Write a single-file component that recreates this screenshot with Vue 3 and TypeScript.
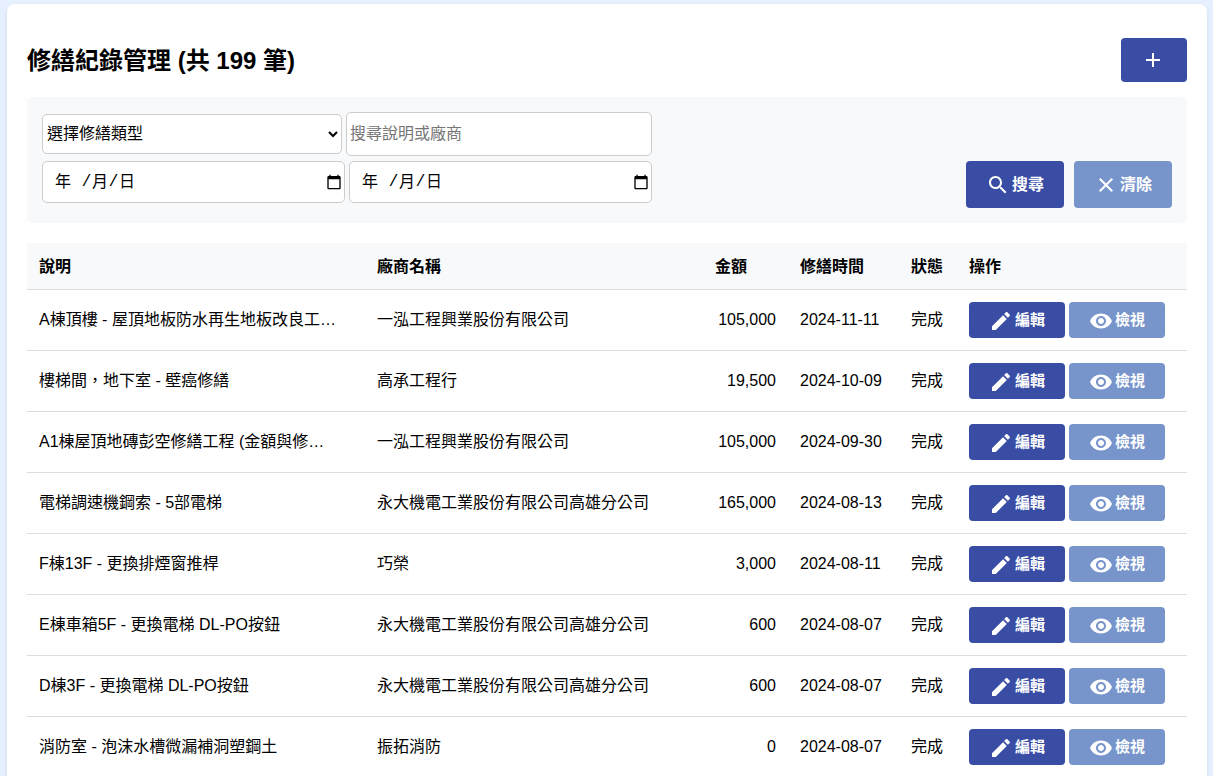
<script setup lang="ts">
import { ref } from 'vue'

interface RepairRecord {
  description: string
  vendor: string
  amount: number
  date: string
  status: string
}

const total = ref(199)
const category = ref('')
const keyword = ref('')
const ranges = ['開始日期', '結束日期']

const records = ref<RepairRecord[]>([
  { description: 'A棟頂樓 - 屋頂地板防水再生地板改良工…', vendor: '一泓工程興業股份有限公司', amount: 105000, date: '2024-11-11', status: '完成' },
  { description: '樓梯間，地下室 - 壁癌修繕', vendor: '高承工程行', amount: 19500, date: '2024-10-09', status: '完成' },
  { description: 'A1棟屋頂地磚彭空修繕工程 (金額與修…', vendor: '一泓工程興業股份有限公司', amount: 105000, date: '2024-09-30', status: '完成' },
  { description: '電梯調速機鋼索 - 5部電梯', vendor: '永大機電工業股份有限公司高雄分公司', amount: 165000, date: '2024-08-13', status: '完成' },
  { description: 'F棟13F - 更換排煙窗推桿', vendor: '巧榮', amount: 3000, date: '2024-08-11', status: '完成' },
  { description: 'E棟車箱5F - 更換電梯 DL-PO按鈕', vendor: '永大機電工業股份有限公司高雄分公司', amount: 600, date: '2024-08-07', status: '完成' },
  { description: 'D棟3F - 更換電梯 DL-PO按鈕', vendor: '永大機電工業股份有限公司高雄分公司', amount: 600, date: '2024-08-07', status: '完成' },
  { description: '消防室 - 泡沫水槽微漏補洞塑鋼土', vendor: '振拓消防', amount: 0, date: '2024-08-07', status: '完成' },
])

const formatAmount = (value: number): string => value.toLocaleString('en-US')
</script>

<template>
  <main class="card">
    <header class="heading">
      <h1>修繕紀錄管理 (共 {{ total }} 筆)</h1>
      <button class="btn primary add" type="button" aria-label="新增">
        <svg viewBox="0 0 24 24" aria-hidden="true"><path d="M19 13h-6v6h-2v-6H5v-2h6V5h2v6h6v2z" /></svg>
      </button>
    </header>

    <form class="filters" @submit.prevent>
      <div class="fields">
        <div class="line">
          <select v-model="category" class="box category" aria-label="修繕類型">
            <option value="">選擇修繕類型</option>
          </select>
          <input v-model="keyword" class="box keyword" type="text" placeholder="搜尋說明或廠商" aria-label="搜尋說明或廠商" />
        </div>
        <div class="line">
          <div v-for="label in ranges" :key="label" class="box date" role="group" :aria-label="label">
            <input class="year" type="text" placeholder="年" :aria-label="label + ' 年'" />
            <span class="slash">/</span>
            <input class="part" type="text" placeholder="月" :aria-label="label + ' 月'" />
            <span class="slash">/</span>
            <input class="part" type="text" placeholder="日" :aria-label="label + ' 日'" />
            <button class="picker" type="button" :aria-label="'選擇' + label">
              <svg viewBox="0 0 24 24" aria-hidden="true"><path d="M20 3h-1V1h-2v2H7V1H5v2H4c-1.1 0-2 .9-2 2v16c0 1.100.9 2 2 2h16c1.100 0 2-.9 2-2V5c0-1.100-.9-2-2-2zm0 18H4V8h16v13z" /></svg>
            </button>
          </div>
        </div>
      </div>
      <div class="actions">
        <button class="btn primary" type="submit">
          <svg viewBox="0 0 24 24" aria-hidden="true"><path d="M15.500 14h-.79l-.28-.27C15.410 12.590 16 11.110 16 9.500 16 5.910 13.090 3 9.500 3S3 5.910 3 9.500 5.910 16 9.500 16c1.610 0 3.090-.59 4.230-1.570l.27.28v.79l5 4.990L20.490 19l-4.990-5zm-6 0C7.010 14 5 11.990 5 9.500S7.010 5 9.500 5 14 7.010 14 9.500 11.990 14 9.500 14z" /></svg>
          <span>搜尋</span>
        </button>
        <button class="btn secondary" type="reset">
          <svg viewBox="0 0 24 24" aria-hidden="true"><path d="M19 6.410L17.590 5 12 10.590 6.410 5 5 6.410 10.590 12 5 17.590 6.410 19 12 13.410 17.590 19 19 17.590 13.410 12z" /></svg>
          <span>清除</span>
        </button>
      </div>
    </form>

    <table>
      <colgroup>
        <col /><col /><col class="c-amount" /><col class="c-date" /><col class="c-status" /><col class="c-ops" />
      </colgroup>
      <thead>
        <tr>
          <th scope="col">說明</th>
          <th scope="col">廠商名稱</th>
          <th scope="col">金額</th>
          <th scope="col">修繕時間</th>
          <th scope="col">狀態</th>
          <th scope="col">操作</th>
        </tr>
      </thead>
      <tbody>
        <tr v-for="(record, i) in records" :key="i">
          <td>{{ record.description }}</td>
          <td>{{ record.vendor }}</td>
          <td class="amount">{{ formatAmount(record.amount) }}</td>
          <td>{{ record.date }}</td>
          <td>{{ record.status }}</td>
          <td>
            <div class="ops">
              <button class="btn primary small" type="button">
                <svg viewBox="0 0 24 24" aria-hidden="true"><path d="M3 17.250V21h3.750L17.810 9.940l-3.750-3.750L3 17.250zM20.710 7.040c.39-.39.39-1.020 0-1.410l-2.340-2.340c-.39-.39-1.020-.39-1.410 0l-1.830 1.830 3.750 3.750 1.830-1.830z" /></svg>
                <span>編輯</span>
              </button>
              <button class="btn secondary small" type="button">
                <svg viewBox="0 0 24 24" aria-hidden="true"><path d="M12 4.500C7 4.500 2.730 7.610 1 12c1.730 4.390 6 7.500 11 7.500s9.270-3.110 11-7.500c-1.730-4.390-6-7.500-11-7.500zM12 17c-2.760 0-5-2.240-5-5s2.240-5 5-5 5 2.240 5 5-2.240 5-5 5zm0-8c-1.660 0-3 1.340-3 3s1.340 3 3 3 3-1.340 3-3-1.340-3-3-3z" /></svg>
                <span>檢視</span>
              </button>
            </div>
          </td>
        </tr>
      </tbody>
    </table>
  </main>
</template>

<style>
body {
  background: #e6f0fe;
}
</style>

<style scoped>
.card,
.card * {
  box-sizing: border-box;
}

.card {
  margin: 4px 6px 0 7px;
  padding: 34px 20px 20px;
  border-radius: 8px;
  background: #fff;
  box-shadow: 0 2px 4px rgba(0, 0, 0, 0.1);
  color: #000;
  font: 16px/24px "Liberation Sans", "Noto Sans CJK TC", sans-serif;
}

.heading {
  display: flex;
  align-items: center;
  justify-content: space-between;
  margin-bottom: 15px;
}

h1 {
  margin: 2px 0 0;
  font-size: 24px;
  line-height: 36px;
}

.btn {
  display: flex;
  align-items: center;
  gap: 2px;
  height: 47px;
  padding: 0 20px;
  border: 0;
  border-radius: 4px;
  color: #fff;
  font: inherit;
  font-weight: 700;
  white-space: nowrap;
  cursor: pointer;
}

.btn svg {
  flex: none;
  width: 24px;
  height: 24px;
  fill: currentColor;
}

.primary {
  background: #394da5;
}

.secondary {
  background: #7895cb;
}

.add {
  width: 66px;
  height: 44px;
}

.small {
  height: 36px;
  font-size: 15px;
}

.small svg {
  margin-top: 2px;
}

.filters {
  display: flex;
  align-items: flex-end;
  justify-content: space-between;
  gap: 20px;
  margin-bottom: 20px;
  padding: 15px;
  border-radius: 5px;
  background: #f8f9fb;
}

.fields {
  display: flex;
  flex: 0 1 610px;
  flex-direction: column;
  gap: 5px;
  padding-bottom: 5px;
}

.line {
  display: flex;
  align-items: baseline;
  gap: 4px;
}

.box {
  border: 1px solid #ccc;
  border-radius: 5px;
  background: #fff;
  color: #000;
  font: inherit;
}

.category {
  flex: 0 1 300px;
  height: 40px;
}

.keyword {
  flex: 1;
  min-width: 0;
  height: 44px;
  padding: 0 3px;
}

.keyword::placeholder {
  color: #757575;
}

.date {
  display: flex;
  flex: 1;
  align-items: center;
  height: 42px;
  padding: 0 2px 0 12px;
}

.date input {
  width: 16px;
  padding: 0;
  border: 0;
  background: none;
  font: inherit;
}

.date input::placeholder {
  color: #000;
}

.date .year {
  width: 26px;
}

.slash {
  width: 11px;
  font-family: "Liberation Mono", monospace;
  text-align: center;
}

.picker {
  display: flex;
  margin-left: auto;
  padding: 0;
  border: 0;
  background: none;
}

.picker svg {
  width: 16px;
  height: 16px;
}

.actions {
  display: flex;
  gap: 10px;
}

table {
  width: 100%;
  border-collapse: collapse;
  table-layout: fixed;
}

.c-amount {
  width: 85px;
}

.c-date {
  width: 111px;
}

.c-status {
  width: 58px;
}

.c-ops {
  width: 230px;
}

th,
td {
  padding: 12px 12px 10px;
  border-bottom: 1px solid #ddd;
  text-align: left;
  white-space: nowrap;
}

td {
  padding: 12px;
}

th {
  background: #f8f9fb;
}

.amount {
  text-align: right;
}

.ops {
  display: flex;
  gap: 4px;
}
</style>
